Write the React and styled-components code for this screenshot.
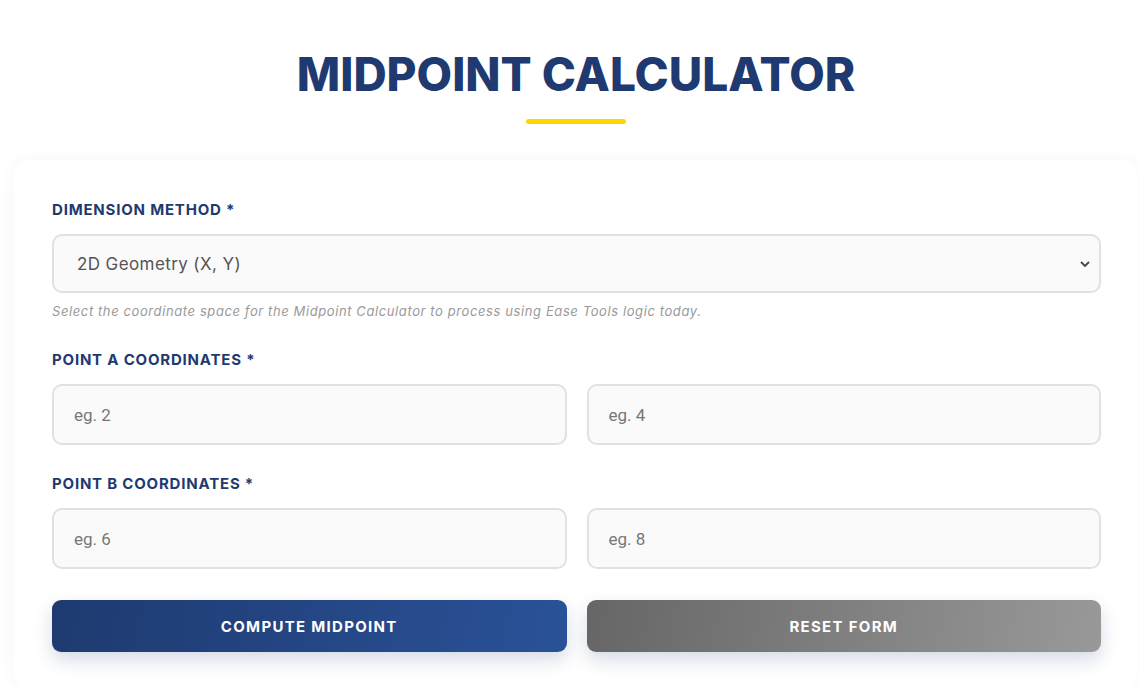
import React from 'react';
import styled, { createGlobalStyle } from 'styled-components';

const GlobalStyle = createGlobalStyle`
    * { box-sizing: border-box; }
    body {
        margin: 0;
        background: #ffffff;
        font-family: Inter, "Noto Sans", sans-serif;
    }
`;

const Page = styled.div`
    padding: 0 1px 0 14px;
`;

const Header = styled.header`
    display: flex;
    flex-direction: column;
    align-items: center;
    padding-top: 46px;
    height: 160px;
`;

const Title = styled.h1`
    margin: 0;
    font-size: 46px;
    line-height: 56px;
    font-weight: 800;
    color: #1e3a70;
`;

const Underline = styled.div`
    width: 100px;
    height: 5px;
    margin-top: 17px;
    border-radius: 3px;
    background: #ffd700;
`;

const Card = styled.div`
    background: #fff;
    border-radius: 16px;
    padding: 40px 37px 38px 38px;
    box-shadow: 0 0 20px rgba(0, 0, 0, 0.04);
`;

const Field = styled.div`
    margin-bottom: ${p => p.$gap || 29}px;
`;

const Label = styled.label`
    display: block;
    font-size: 15px;
    line-height: 20px;
    font-weight: 700;
    letter-spacing: 0.8px;
    color: #1e3a70;
    margin-bottom: 14px;
`;

const SelectWrap = styled.div`
    position: relative;
`;

const Select = styled.select`
    width: 100%;
    height: 59px;
    appearance: none;
    padding: 0 40px 0 23px;
    border: 2px solid #e1e1e1;
    border-radius: 10px;
    background: #fafafa;
    font-family: Inter, sans-serif;
    font-size: 17px;
    letter-spacing: 0.4px;
    color: #555;
    outline: none;
`;

const Chevron = styled.svg`
    position: absolute;
    right: 10px;
    top: 50%;
    transform: translateY(-50%);
    pointer-events: none;
`;

const Hint = styled.p`
    margin: 9px 0 0;
    font-size: 13px;
    line-height: 18px;
    font-style: italic;
    letter-spacing: 0.6px;
    color: #9a9a9a;
`;

const Row = styled.div`
    display: grid;
    grid-template-columns: 1fr 1fr;
    gap: 20px;
`;

const Input = styled.input`
    height: 61px;
    padding: 0 20px;
    border: 2px solid #e1e1e1;
    border-radius: 10px;
    background: #fafafa;
    font-family: Roboto, sans-serif;
    font-size: 17px;
    color: #333;
    outline: none;
    &::placeholder { color: #777; }
`;

const Button = styled.button`
    height: 52px;
    border: none;
    border-radius: 9px;
    font-family: Inter, sans-serif;
    font-size: 15px;
    font-weight: 700;
    letter-spacing: 1.3px;
    color: #fff;
    cursor: pointer;
    background: ${p => p.$secondary
        ? 'linear-gradient(100deg, #666666, #999999)'
        : 'linear-gradient(100deg, #1e3a70, #2a5298)'};
    box-shadow: 0 8px 18px rgba(30, 58, 112, 0.18);
`;

export default function App() {
    return (
        <Page>
            <GlobalStyle />
            <Header>
                <Title>MIDPOINT CALCULATOR</Title>
                <Underline />
            </Header>
            <Card>
                <Field $gap={30}>
                    <Label>DIMENSION METHOD *</Label>
                    <SelectWrap>
                        <Select defaultValue="2d">
                            <option value="2d">2D Geometry (X, Y)</option>
                            <option value="3d">3D Geometry (X, Y, Z)</option>
                        </Select>
                        <Chevron width="12" height="12" viewBox="0 0 12 12">
                            <path d="M2 4l4 4 4-4" fill="none" stroke="#444" strokeWidth="1.8" />
                        </Chevron>
                    </SelectWrap>
                    <Hint>Select the coordinate space for the Midpoint Calculator to process using Ease Tools logic today.</Hint>
                </Field>
                <Field>
                    <Label>POINT A COORDINATES *</Label>
                    <Row>
                        <Input placeholder="eg. 2" />
                        <Input placeholder="eg. 4" />
                    </Row>
                </Field>
                <Field $gap={31}>
                    <Label>POINT B COORDINATES *</Label>
                    <Row>
                        <Input placeholder="eg. 6" />
                        <Input placeholder="eg. 8" />
                    </Row>
                </Field>
                <Row>
                    <Button>COMPUTE MIDPOINT</Button>
                    <Button $secondary>RESET FORM</Button>
                </Row>
            </Card>
        </Page>
    );
}
